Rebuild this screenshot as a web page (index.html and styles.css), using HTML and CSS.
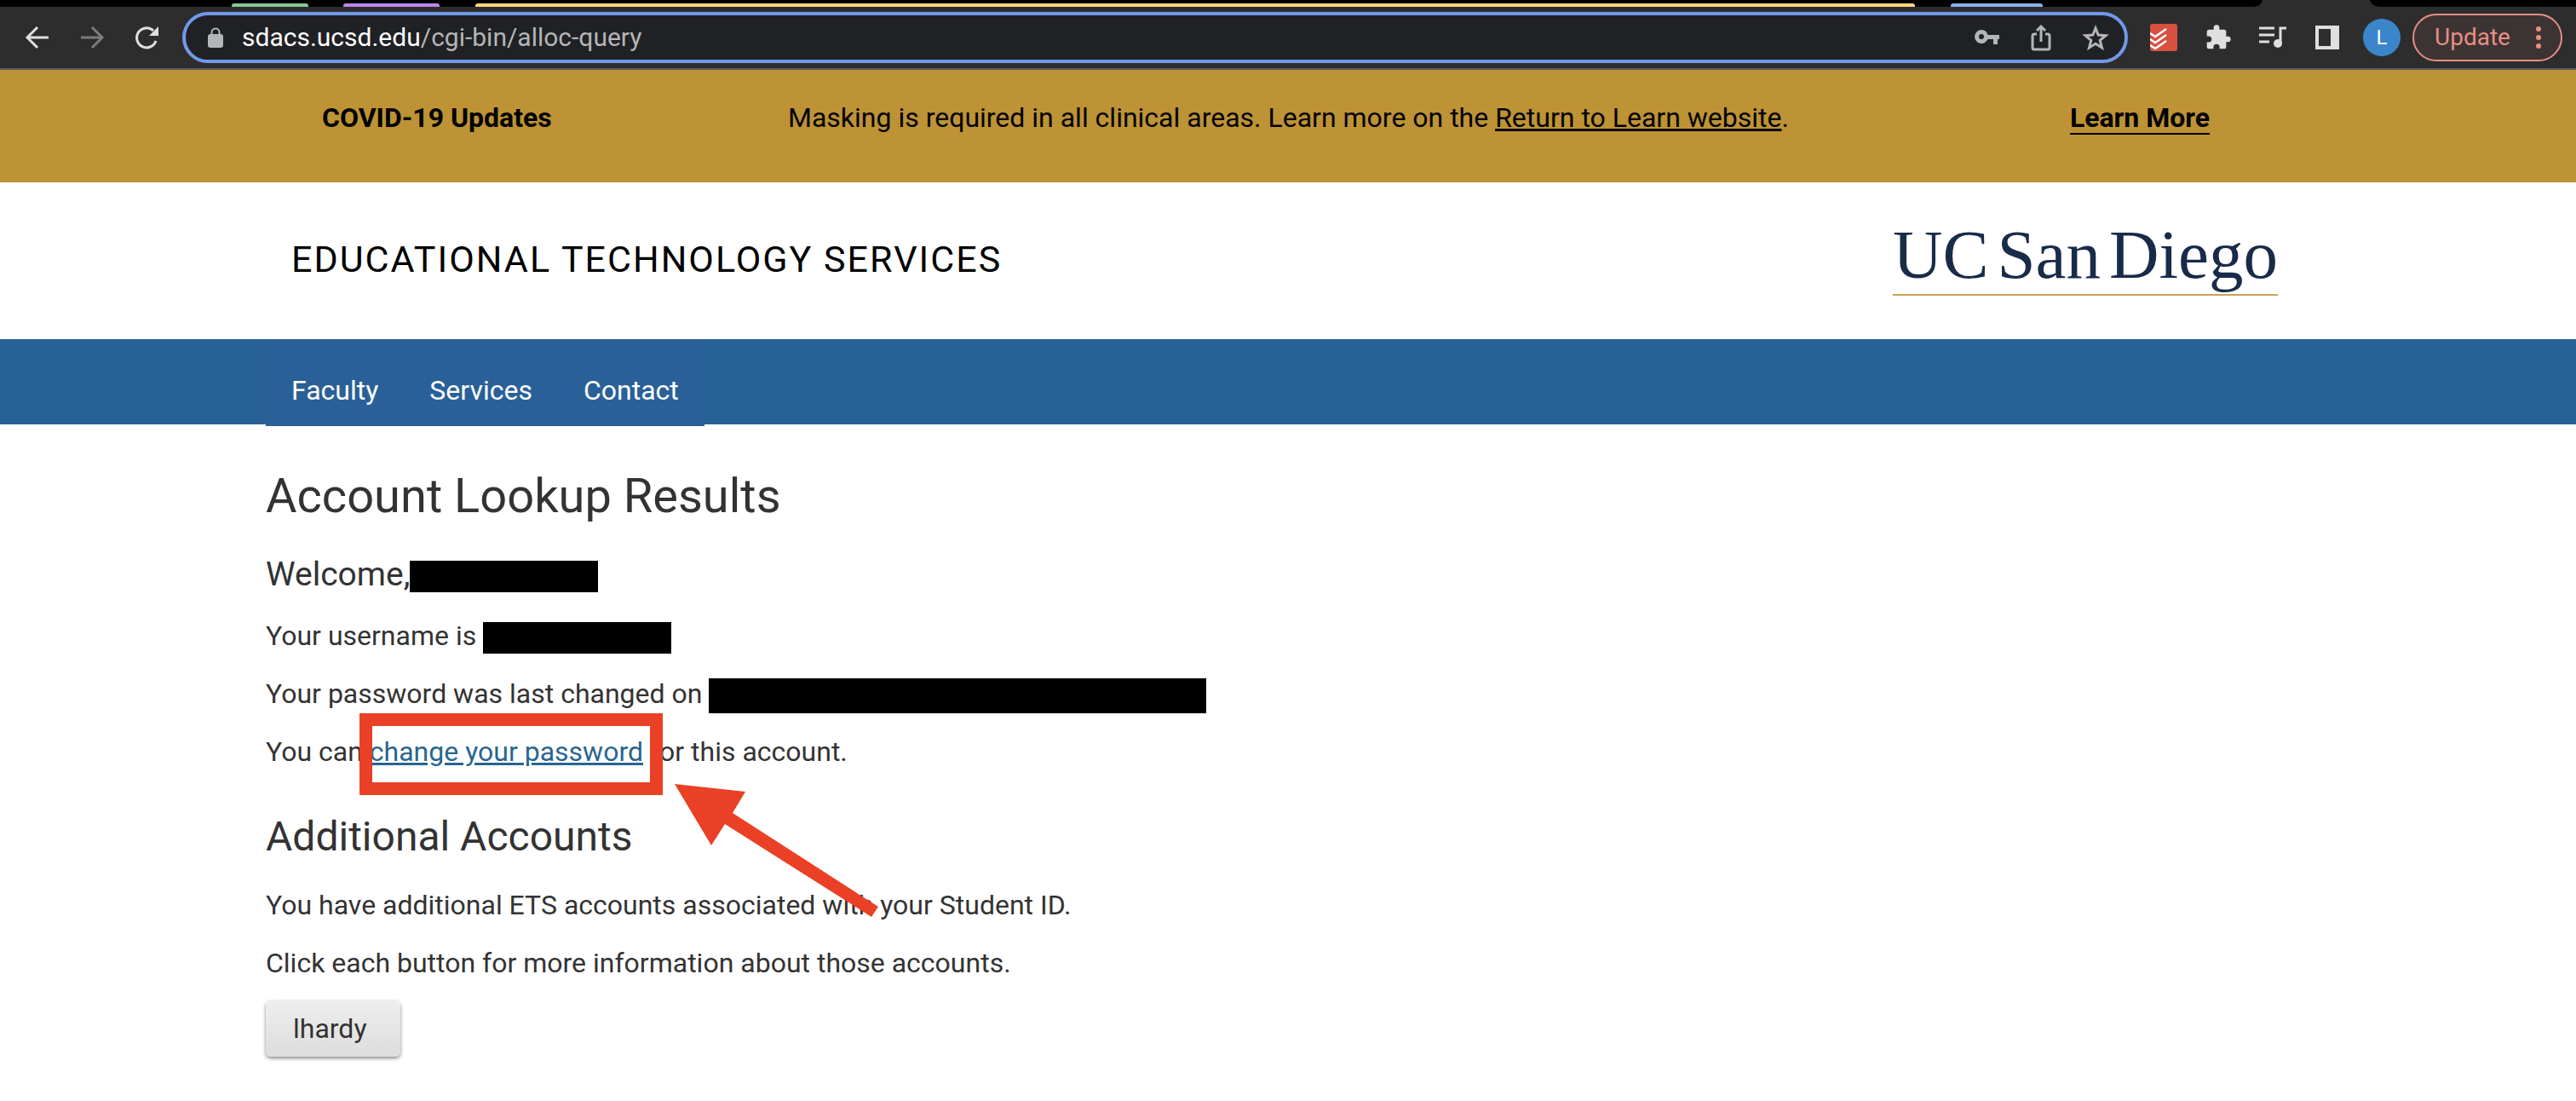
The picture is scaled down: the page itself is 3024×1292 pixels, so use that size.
FILE: index.html
```
<!DOCTYPE html>
<html lang="en">
<head>
<meta charset="utf-8">
<title>Account Lookup Results</title>
<link rel="stylesheet" href="styles.css">
</head>
<body>
<div class="browser">
  <div class="tabstrip">
    <svg width="100%" height="8" aria-hidden="true">
      <rect x="272" y="4" width="90" height="8" rx="3" fill="#87c897"/>
      <rect x="403" y="4" width="113" height="8" rx="3" fill="#bb86ee"/>
      <rect x="558" y="4" width="1690" height="8" rx="3" fill="#f9d679"/>
      <rect x="2290" y="4" width="108" height="8" rx="3" fill="#8ab0f5"/>
      <path d="M2644 8q10 0 12-8h126q2 8 14 8z" fill="#2d2d2d"/>
    </svg>
  </div>
  <div class="toolbar">
    <button class="tool" aria-label="Back"><svg width="32" height="32" viewBox="0 0 32 32" class="thin"><path d="M29 16H4M16 4 4 16l12 12"/></svg></button>
    <button class="tool dim" aria-label="Forward"><svg width="32" height="32" viewBox="0 0 32 32" class="thin"><path d="M3 16h25M16 4l12 12-12 12"/></svg></button>
    <button class="tool reload" aria-label="Reload"><svg width="32" height="32" viewBox="0 0 32 32" class="thin"><path d="M27 20A11.500 11.500 0 1 1 24 8"/><path d="M30 3v11H19z" fill="currentColor" stroke="none"/></svg></button>
    <div class="address">
      <svg width="18" height="24" viewBox="0 0 18 24" class="lock"><path d="M4.500 10V6a4.500 4.500 0 0 1 9 0v4" fill="none" stroke="currentColor" stroke-width="2"/><rect x="0" y="8" width="18" height="16" rx="3" fill="currentColor"/></svg>
      <span class="url"><b>sdacs.ucsd.edu</b>/cgi-bin/alloc-query</span>
      <button class="tool" aria-label="Passwords"><svg width="32" height="32" viewBox="0 0 32 32"><path fill="currentColor" fill-rule="evenodd" d="M10 7a8 8 0 1 0 7.500 11H24v6h5v-6h2v-5H17.500A8 8 0 0 0 10 7zm0 5a3 3 0 1 1 0 6 3 3 0 0 1 0-6z"/></svg></button>
      <button class="tool" aria-label="Share"><svg width="32" height="32" viewBox="0 0 32 32" class="thin"><path d="M11 12H8q-2 0-2 2v14q0 2 2 2h16q2 0 2-2V14q0-2-2-2h-3M16 21V4M11 8l5-5 5 5"/></svg></button>
      <button class="tool" aria-label="Bookmark"><svg width="32" height="32" viewBox="0 0 32 32" class="thin"><path d="m16 5 3.200 8 8.800.7-6.800 5.600L23.500 28 16 23.300 8.500 28l2.300-8.700L4 13.700l8.800-.7z"/></svg></button>
    </div>
    <button class="tool" aria-label="Tasks"><svg width="32" height="32" viewBox="0 0 32 32"><rect width="32" height="32" rx="3" fill="#d8503f"/><path d="m0 11 6 4L19 6M0 18l6 4 13-9M0 25l6 4 13-9" fill="none" stroke="#fff" stroke-width="2.500"/></svg></button>
    <button class="tool" aria-label="Extensions"><svg width="32" height="32" viewBox="0 0 24 24"><path fill="currentColor" d="M20.500 11H19V7a2 2 0 0 0-2-2h-4V3.500a2.500 2.500 0 0 0-5 0V5H4a2 2 0 0 0-2 2v3.800h1.500a2.700 2.700 0 0 1 0 5.400H2V20a2 2 0 0 0 2 2h3.800v-1.500a2.700 2.700 0 0 1 5.400 0V22H17a2 2 0 0 0 2-2v-4h1.500a2.500 2.500 0 0 0 0-5z"/></svg></button>
    <button class="tool" aria-label="Media"><svg width="32" height="32" viewBox="0 0 32 32" class="thin"><path d="M0 5h18M0 13h18M0 21h12M25 24V5h7"/><circle cx="22" cy="23" r="5" fill="currentColor" stroke="none"/></svg></button>
    <button class="tool panel" aria-label="Side panel"><svg width="32" height="32" viewBox="0 0 32 32"><path fill="currentColor" fill-rule="evenodd" d="M2 2h28v28H2zM6 6v20h14V6z"/></svg></button>
    <button class="avatar">L</button>
    <button class="update">Update <svg width="8" height="28" viewBox="0 0 8 28" fill="currentColor"><circle cx="4" cy="4" r="3"/><circle cx="4" cy="14" r="3"/><circle cx="4" cy="24" r="3"/></svg></button>
  </div>
</div>
<div class="alert">
  <div class="container alert-row">
    <strong>COVID-19 Updates</strong>
    <span>Masking is required in all clinical areas. Learn more on the <a href="#">Return to Learn website</a>.</span>
    <a class="more" href="#">Learn More</a>
  </div>
</div>
<header class="container masthead">
  <a class="title" href="#">EDUCATIONAL TECHNOLOGY SERVICES</a>
  <a class="logo" href="#"><span>UC</span><span>San</span><span>Diego</span></a>
</header>
<nav class="nav">
  <div class="container">
    <div class="menu"><a href="#">Faculty</a><a href="#">Services</a><a href="#">Contact</a></div>
  </div>
</nav>
<main class="container content">
  <h1>Account Lookup Results</h1>
  <h3>Welcome,<span class="redacted"></span></h3>
  <p>Your username is <span class="redacted"></span></p>
  <p>Your password was last changed on <span class="redacted wide"></span></p>
  <p>You can <span class="marked"><a href="#">change your password</a><svg class="arrow" width="240" height="158" viewBox="0 0 240 158" aria-hidden="true"><path fill="#ea4025" d="M0 0 83 9 68 34 239 144 231 156 59 47 43 72z"/></svg></span> for this account.</p>
  <h2>Additional Accounts</h2>
  <p>You have additional ETS accounts associated with your Student ID.</p>
  <p>Click each button for more information about those accounts.</p>
  <button class="account">lhardy</button>
</main>
</body>
</html>
```
FILE: styles.css
```
*, *::after { box-sizing: border-box; }
body { margin: 0; background: #fff; color: #333; font: 32px/48px Roboto, sans-serif; }
button { font: inherit; border: 0; background: none; padding: 0; color: inherit; }
.container { max-width: 2400px; margin: 0 auto; }

.tabstrip { height: 8px; background: #000; }
.tabstrip svg { display: block; }
.toolbar { display: flex; align-items: center; height: 74px; padding: 0 16px 0 28px; background: #2d2d2d; border-bottom: 2px solid #58595b; color: #dfdfdf; }
.tool { display: flex; margin-right: 32px; }
.tool.reload, .tool.panel { margin-right: 26px; }
.tool.dim { color: #7d7d7d; }
.thin { fill: none; stroke: currentColor; stroke-width: 3; }
.address { flex: 1; display: flex; align-items: center; height: 60px; margin-right: 26px; padding-left: 26px; border: 4px solid #7099ec; border-radius: 30px; background: #202124; color: #b4b5b8; }
.lock { margin-right: 22px; }
.url { flex: 1; font-size: 30px; }
.url b { color: #fff; font-weight: 400; }
.address .tool:last-child { margin-right: 18px; }
.avatar { width: 44px; height: 44px; margin-right: 14px; border-radius: 50%; background: #3b86cb; color: #fff; font-size: 24px; line-height: 44px; }
.update { display: flex; align-items: center; justify-content: space-between; width: 176px; height: 56px; padding: 0 22px 0 24px; border: 2px solid #e78e84; border-radius: 28px; background: #3c3433; color: #e78e84; font-size: 28px; }

.alert { height: 132px; padding-top: 32px; background: #bd9335; color: #000; }
.alert a { color: #000; }
.alert-row { display: flex; padding: 0 118px 0 66px; }
.alert strong { flex: 0 0 547px; }
.alert strong, .more { font-weight: 700; }
.alert .more { height: 44px; margin-left: auto; border-bottom: 2px solid #000; text-decoration: none; }

.masthead { display: flex; justify-content: space-between; height: 184px; padding: 40px 38px 0 30px; }
.title { padding-top: 26px; color: #000; font-size: 43px; letter-spacing: 2px; text-decoration: none; }
.logo { display: flex; gap: 10px; height: 93px; color: #182b49; border-bottom: 2px solid #c9a353; font: 81px/91px "Liberation Serif", serif; text-decoration: none; }

.nav { height: 100px; background: #276196; }
.menu { display: inline-flex; gap: 60px; height: 102px; padding: 36px 30px 0; background: #296098; }
.menu a { color: #fff; text-decoration: none; }

.content { padding: 48px 0 52px; }
h1, h2, h3 { font-weight: 400; margin: 0; }
h1 { font-size: 56px; line-height: 72px; margin-bottom: 32px; }
h2 { font-size: 48px; line-height: 64px; margin: 44px 0 24px; }
h3 { font-size: 39px; line-height: 48px; margin-bottom: 24px; }
p { margin: 0 0 20px; }
.redacted { display: inline-block; width: 221px; height: 37px; background: #000; vertical-align: middle; }
.redacted.wide { width: 584px; height: 41px; }
.content a { color: #296590; }
.marked { position: relative; }
.marked::after { content: ""; position: absolute; left: -12px; top: -26px; width: 356px; height: 96px; border: 15px solid #ea4025; }
.arrow { position: absolute; left: 358px; top: 57px; }
.account { display: block; width: 158px; height: 66px; padding-left: 32px; border-radius: 6px; background: linear-gradient(#eee, #ddd); box-shadow: 0 2px 4px #888; color: #333; text-align: left; }
```
